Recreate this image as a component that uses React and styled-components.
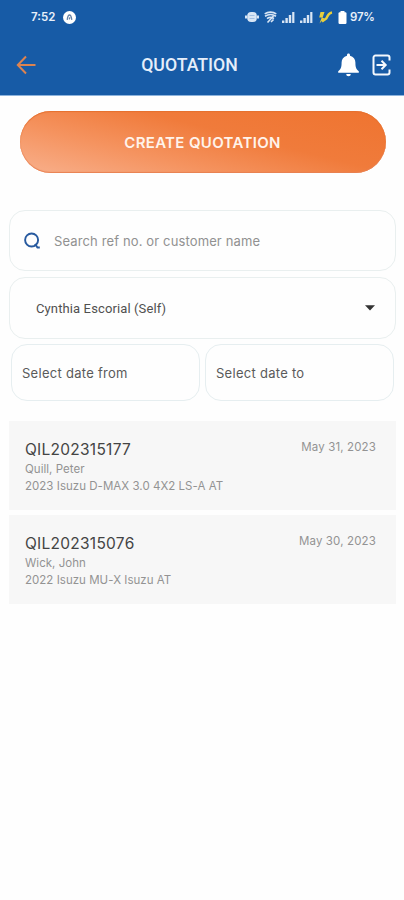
import React from 'react';
import styled, { createGlobalStyle } from 'styled-components';

const quotations = [
  {
    ref: 'QIL202315177',
    customer: 'Quill, Peter',
    unit: '2023 Isuzu D-MAX 3.0 4X2 LS-A AT',
    date: 'May 31, 2023',
  },
  {
    ref: 'QIL202315076',
    customer: 'Wick, John',
    unit: '2022 Isuzu MU-X Isuzu AT',
    date: 'May 30, 2023',
  },
];

const SignalIcon = () => (
  <svg width="13" height="12" viewBox="0 0 13 12" fill="#d9e6f5">
    <rect x="0" y="9.5" width="2.4" height="2.5" />
    <rect x="3.4" y="7" width="2.4" height="5" />
    <rect x="6.8" y="4" width="2.4" height="8" />
    <rect x="10.2" y="1" width="2.2" height="11" />
  </svg>
);

const App = () => (
  <Screen>
    <GlobalStyle />
    <TopArea>
      <StatusBar>
        <Clock>7:52</Clock>
        <svg width="13" height="13" viewBox="0 0 13 13">
          <circle cx="6.5" cy="6.5" r="6.5" fill="#fff" />
          <path d="M4.2 8.8C4.6 6 5.5 4 6.5 4s1.9 2 2.3 4.8M6.3 8.3l.5-2" fill="none" stroke="#6482a8" strokeWidth="1.3" />
        </svg>
        <StatusIcons>
          <svg width="14" height="12" viewBox="0 0 14 12">
            <path d="M1 4.5v3M13 4.5v3" stroke="#d9e6f5" strokeWidth="2" />
            <rect x="2.2" y="1" width="9.6" height="10" rx="4" fill="#d9e6f5" />
            <path d="M4.500 4.500h5M4.500 7.500h5" stroke="#a3c0e2" strokeWidth="1" />
          </svg>
          <svg width="13" height="12" viewBox="0 0 13 12" fill="none" stroke="#d9e6f5" strokeWidth="1.6">
            <path d="M0.7 2.8C4 0.6 9 0.6 12.3 2.8M1 5.2C4.5 3 8.5 3 12 5.2M3 7.6c2.2-1.6 4.8-1.6 7 0" />
            <path d="M3.5 11.5L9.500 5M7 11l2.500-2.500" />
          </svg>
          <SignalIcon />
          <SignalIcon />
          <svg width="15" height="13" viewBox="0 0 15 13">
            <path d="M2.5 1L1.2 6.500h2.500L1.500 12.500 6.500 7H4.500L6.500 1z" fill="#e8cf3c" />
            <path d="M14 1.500C11 2 9.500 4.500 8.300 7.500L4 10.500" fill="none" stroke="#e8cf3c" strokeWidth="2.400" />
          </svg>
          <svg width="9" height="13" viewBox="0 0 9 13" fill="#fff">
            <rect x="2.5" y="0" width="4" height="3" />
            <rect x="0.5" y="1.3" width="8" height="11.7" rx="1.2" />
          </svg>
          <Battery>97%</Battery>
        </StatusIcons>
      </StatusBar>
      <Header>
        <BackButton aria-label="Back">
          <svg width="20" height="20" viewBox="0 0 20 20" fill="none" stroke="#dc8350" strokeWidth="2">
            <path d="M19.5 10H2M10 1.5L1.8 10 10 18.5" />
          </svg>
        </BackButton>
        <Title>QUOTATION</Title>
        <Actions>
          <svg width="21" height="24" viewBox="0 0 21 24" fill="#fff">
            <path d="M10.5 0.6c.9 0 1.500.7 1.500 1.500v.7c3.500.8 5.400 3.400 5.400 6.700 0 4.700.900 7.200 3.400 8.700v1.600H.2v-1.600c2.500-1.500 3.400-4 3.400-8.700 0-3.300 1.900-5.900 5.400-6.700v-.7c0-.8.600-1.500 1.500-1.500zM8.200 20.900h4.600a2.300 2.300 0 0 1-4.600 0z" />
          </svg>
          <svg width="19" height="22" viewBox="0 0 19 22" fill="none" stroke="#f4f8fd" strokeWidth="2">
            <path d="M17.5 6.500V3.500a2 2 0 0 0-2-2H3.500a2 2 0 0 0-2 2v15a2 2 0 0 0 2 2H15.500a2 2 0 0 0 2-2V15.500" />
            <path d="M4.500 11h9M9.500 6.800L13.700 11l-4.200 4.200" />
          </svg>
        </Actions>
      </Header>
    </TopArea>
    <CreateButton>CREATE QUOTATION</CreateButton>
    <Filters>
      <SearchBox>
        <svg width="18" height="18" viewBox="0 0 18 18" fill="none" stroke="#285a9f" strokeWidth="1.9">
          <circle cx="8.600" cy="8" r="6.500" />
          <path d="M12 12l2.500 3.600h2.300" strokeWidth="2" />
        </svg>
        <Placeholder>Search ref no. or customer name</Placeholder>
      </SearchBox>
      <SelectBox>
        <Selected>Cynthia Escorial (Self)</Selected>
        <svg width="10" height="6" viewBox="0 0 10 6" fill="#333">
          <path d="M0 0.3h10L5 5.6z" />
        </svg>
      </SelectBox>
      <DateRow>
        <DateBox>Select date from</DateBox>
        <DateBox>Select date to</DateBox>
      </DateRow>
    </Filters>
    <List>
      {quotations.map((item) => (
        <Card key={item.ref}>
          <div>
            <Reference>{item.ref}</Reference>
            <Detail>{item.customer}</Detail>
            <Detail>{item.unit}</Detail>
          </div>
          <CardDate>{item.date}</CardDate>
        </Card>
      ))}
    </List>
  </Screen>
);

const GlobalStyle = createGlobalStyle`
  * {
    box-sizing: border-box;
  }

  body {
    margin: 0;
    background: #fefefe;
    font-family: Inter, sans-serif;
  }

  svg {
    display: block;
    flex-shrink: 0;
  }
`;

const Screen = styled.main`
  width: 404px;
  height: 900px;
  overflow: hidden;
  background: #fefefe;
  white-space: nowrap;
`;

const TopArea = styled.div`
  height: 96px;
  background: #175ba6;
  border-bottom: 1px solid #8db3dc;
`;

const StatusBar = styled.div`
  display: flex;
  align-items: center;
  height: 34px;
  padding: 0 29px 0 31px;
  color: #e8f0fa;
`;

const Clock = styled.span`
  width: 32px;
  font-size: 11.5px;
  font-weight: 600;
`;

const StatusIcons = styled.div`
  display: flex;
  align-items: center;
  gap: 5px;
  margin-left: auto;
`;

const Battery = styled.span`
  width: 25px;
  margin-left: -2px;
  font-size: 11.5px;
  font-weight: 600;
  letter-spacing: -0.2px;
`;

const Header = styled.header`
  display: grid;
  grid-template-columns: 80px 1fr 80px;
  align-items: center;
  height: 61px;
  padding: 0 13px 0 16px;
`;

const BackButton = styled.button`
  padding: 0;
  border: 0;
  background: none;
`;

const Title = styled.h1`
  margin: 0 28px 0 0;
  color: #e6eefa;
  font-family: Roboto, sans-serif;
  font-size: 17.7px;
  font-weight: 500;
  text-align: center;
`;

const Actions = styled.div`
  display: flex;
  align-items: center;
  justify-content: flex-end;
  gap: 13px;
`;

const CreateButton = styled.button`
  display: block;
  width: 366px;
  height: 62px;
  margin: 15px 0 0 19.5px;
  padding: 0;
  border: 0;
  border-radius: 31px;
  background: linear-gradient(14deg, #f8b08c 0%, #f5935f 32%, #f07b3b 60%, #ef7430 100%);
  box-shadow: inset 0 1px 1px #e5702f, inset 0 -1px 1px #e88152;
  color: #fff3eb;
  font-family: Inter, sans-serif;
  font-size: 15px;
  font-weight: 600;
  letter-spacing: 0.33px;
`;

const Filters = styled.section`
  margin: 37px 8px 0 9px;
`;

const SearchBox = styled.div`
  display: flex;
  align-items: center;
  height: 61px;
  padding: 0 13px;
  border: 1px solid #e9efef;
  border-radius: 16px;
`;

const Placeholder = styled.span`
  margin-left: 13px;
  color: #919191;
  font-size: 13px;
  letter-spacing: 0.13px;
`;

const SelectBox = styled.div`
  display: flex;
  align-items: center;
  justify-content: space-between;
  height: 62px;
  margin-top: 6px;
  padding: 0 20px 0 26px;
  border: 1px solid #e9efef;
  border-radius: 16px;
`;

const Selected = styled.span`
  color: #505050;
  font-family: Roboto, sans-serif;
  font-size: 13px;
  letter-spacing: 0.12px;
`;

const DateRow = styled.div`
  display: grid;
  grid-template-columns: 1fr 1fr;
  gap: 5px;
  margin: 5px 2px 0;
`;

const DateBox = styled.div`
  display: flex;
  align-items: center;
  height: 57px;
  padding-left: 10px;
  border: 1px solid #e6eef0;
  border-radius: 16px;
  color: #5a5a5a;
  font-size: 13px;
  letter-spacing: 0.28px;
`;

const List = styled.section`
  display: grid;
  gap: 5px;
  margin: 20px 8px 0 9px;
`;

const Card = styled.article`
  display: flex;
  justify-content: space-between;
  height: 89px;
  padding: 18px 20px 0 16px;
  background: #f7f7f7;
`;

const Reference = styled.h2`
  margin: 1px 0;
  color: #444;
  font-size: 15.5px;
  font-weight: 400;
  line-height: 20px;
  letter-spacing: 0.26px;
`;

const Detail = styled.p`
  margin: 0;
  color: #939393;
  font-size: 11.5px;
  line-height: 16.5px;
  letter-spacing: 0.03px;
`;

const CardDate = styled.time`
  color: #939393;
  font-size: 11.5px;
  line-height: 16px;
  letter-spacing: 0.14px;
`;

export default App;
